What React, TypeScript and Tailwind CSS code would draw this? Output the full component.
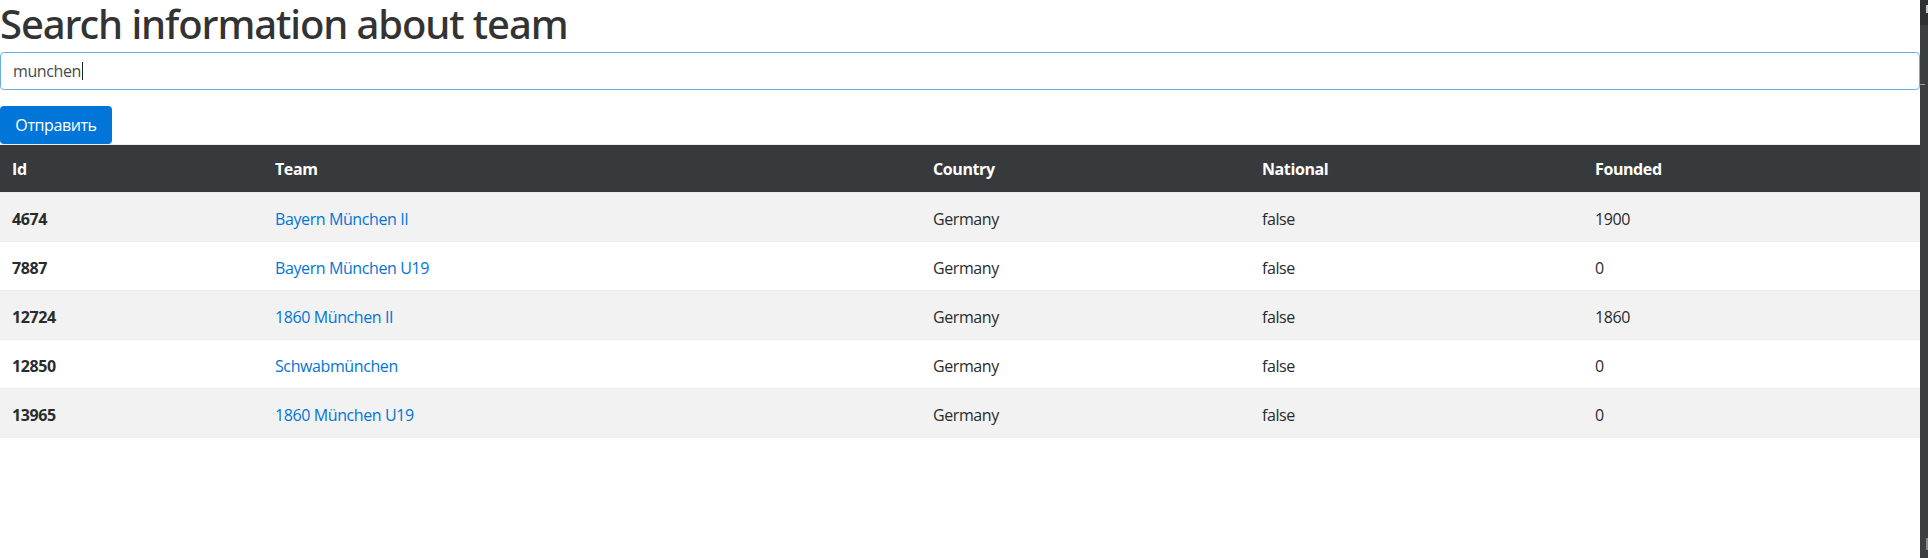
import React from 'react';

interface TeamRow {
  id: number;
  team: string;
  country: string;
  national: boolean;
  founded: number;
}

const rows: TeamRow[] = [
  { id: 4674, team: 'Bayern München II', country: 'Germany', national: false, founded: 1900 },
  { id: 7887, team: 'Bayern München U19', country: 'Germany', national: false, founded: 0 },
  { id: 12724, team: '1860 München II', country: 'Germany', national: false, founded: 1860 },
  { id: 12850, team: 'Schwabmünchen', country: 'Germany', national: false, founded: 0 },
  { id: 13965, team: '1860 München U19', country: 'Germany', national: false, founded: 0 },
];

const font = { fontFamily: '"Open Sans", "Noto Sans", "Liberation Sans", sans-serif' };

export default function App() {
  return (
    <div className="flex h-[558px] w-[1928px] bg-white text-[#292b2c]" style={font}>
      {/* Page */}
      <div className="w-[1920px] shrink-0">
        <h1
          className="mb-1 h-[48px] text-[40px] leading-[48px] font-medium tracking-[-1.1px] text-[#333]"
          style={{ fontFamily: '"Noto Sans", "Open Sans", sans-serif' }}
        >
          Search information about team
        </h1>

        <form onSubmit={(e) => e.preventDefault()}>
          <div className="flex h-[38px] w-[1920px] items-center rounded-[4px] border border-[#66afe9] px-[12px] text-[16px]">
            <span className="tracking-[-0.4px] text-[#464a4c]">munchen</span>
            <span className="ml-[1px] h-[18px] w-px bg-[#222]" />
          </div>
          <button
            type="submit"
            className="mt-4 h-[38px] w-[112px] rounded-[4px] bg-[#0275d8] text-[16px] tracking-[-0.4px] text-white"
          >
            Отправить
          </button>
        </form>

        {/* Results */}
        <table className="w-[1920px] table-fixed border-collapse text-[16px] tracking-[-0.4px]">
          <colgroup>
            <col className="w-[263px]" />
            <col className="w-[658px]" />
            <col className="w-[329px]" />
            <col className="w-[333px]" />
            <col className="w-[337px]" />
          </colgroup>
          <thead>
            <tr className="border-t border-[#eceeef] bg-[#373a3c] text-left text-white">
              <th className="h-[48px] px-3 font-bold">Id</th>
              <th className="px-3 font-bold">Team</th>
              <th className="px-3 font-bold">Country</th>
              <th className="px-3 font-bold">National</th>
              <th className="px-3 font-bold">Founded</th>
            </tr>
          </thead>
          <tbody>
            {rows.map((row, i) => (
              <tr
                key={row.id}
                className={`h-[49px] border-t border-[#eceeef] ${i % 2 === 0 ? 'bg-[#f2f2f2]' : 'bg-white'}`}
              >
                <td className="px-3 pt-[3px] font-bold">{row.id}</td>
                <td className="px-3 pt-[3px]">
                  <a href="#" className="text-[#0275d8]">
                    {row.team}
                  </a>
                </td>
                <td className="px-3 pt-[3px]">{row.country}</td>
                <td className="px-3 pt-[3px]">{String(row.national)}</td>
                <td className="px-3 pt-[3px]">{row.founded}</td>
              </tr>
            ))}
          </tbody>
        </table>
      </div>

      {/* Editor scrollbar strip on the right edge */}
      <div className="flex w-[8px] shrink-0 flex-col bg-[#3c3f41]">
        <div className="flex h-[25px] justify-end bg-[#2e3032] pt-[5px]">
          <div className="h-[8px] w-[2px] bg-[#c8c8c8]" />
        </div>
        <div className="mt-[59px] h-px w-[5px] bg-[#9a9a9a]" />
        <div className="flex-1" />
        <div className="mb-[8px] ml-auto h-[12px] w-[2px] bg-[#8a8a8a]" />
      </div>
    </div>
  );
}
